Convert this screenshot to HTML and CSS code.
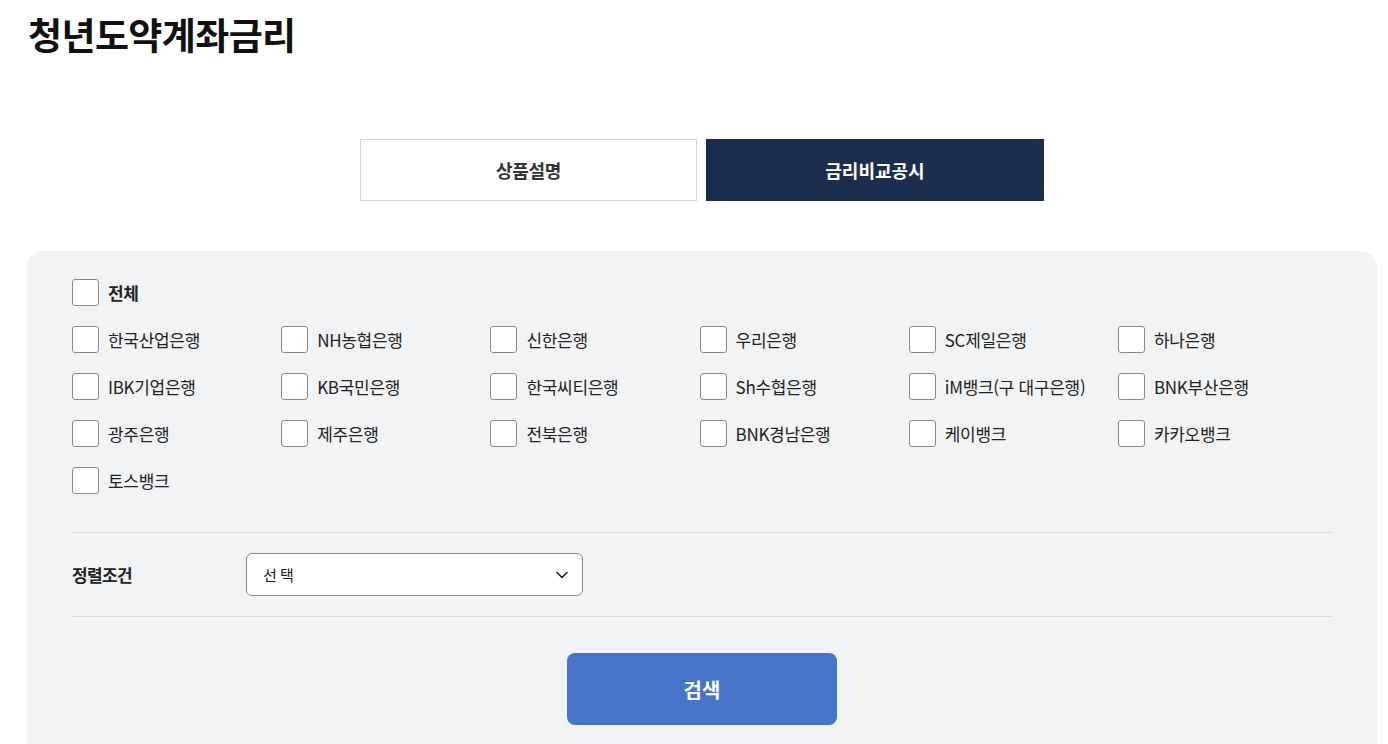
FILE: index.html
```html
<!DOCTYPE html>
<html lang="ko">
<head>
<meta charset="utf-8">
<title>청년도약계좌금리</title>
<link rel="stylesheet" href="styles.css">
</head>
<body>
<div class="page">
  <h1 class="title">청년도약계좌금리</h1>
  <div class="tabs">
    <div class="tab">상품설명</div>
    <div class="tab tab-active">금리비교공시</div>
  </div>
  <div class="panel">
    <label class="check check-all"><span class="box"></span><span class="lbl">전체</span></label>
    <div class="bank-grid">
      <label class="check"><span class="box"></span><span class="lbl">한국산업은행</span></label>
      <label class="check"><span class="box"></span><span class="lbl">NH농협은행</span></label>
      <label class="check"><span class="box"></span><span class="lbl">신한은행</span></label>
      <label class="check"><span class="box"></span><span class="lbl">우리은행</span></label>
      <label class="check"><span class="box"></span><span class="lbl">SC제일은행</span></label>
      <label class="check"><span class="box"></span><span class="lbl">하나은행</span></label>
      <label class="check"><span class="box"></span><span class="lbl">IBK기업은행</span></label>
      <label class="check"><span class="box"></span><span class="lbl">KB국민은행</span></label>
      <label class="check"><span class="box"></span><span class="lbl">한국씨티은행</span></label>
      <label class="check"><span class="box"></span><span class="lbl">Sh수협은행</span></label>
      <label class="check"><span class="box"></span><span class="lbl">iM뱅크(구 대구은행)</span></label>
      <label class="check"><span class="box"></span><span class="lbl">BNK부산은행</span></label>
      <label class="check"><span class="box"></span><span class="lbl">광주은행</span></label>
      <label class="check"><span class="box"></span><span class="lbl">제주은행</span></label>
      <label class="check"><span class="box"></span><span class="lbl">전북은행</span></label>
      <label class="check"><span class="box"></span><span class="lbl">BNK경남은행</span></label>
      <label class="check"><span class="box"></span><span class="lbl">케이뱅크</span></label>
      <label class="check"><span class="box"></span><span class="lbl">카카오뱅크</span></label>
      <label class="check"><span class="box"></span><span class="lbl">토스뱅크</span></label>
    </div>
    <div class="sort-row">
      <div class="sort-label">정렬조건</div>
      <div class="select">
        <span class="select-text">선 택</span>
        <svg class="chev" width="12" height="8" viewBox="0 0 12 8"><path d="M1 1.5 L6 6.5 L11 1.5" fill="none" stroke="#222" stroke-width="1.6" stroke-linecap="round" stroke-linejoin="round"/></svg>
      </div>
    </div>
    <div class="btn-row">
      <button class="search-btn">검색</button>
    </div>
  </div>
</div>
</body>
</html>
```

FILE: styles.css
```css
* { box-sizing: border-box; }
html, body { margin: 0; padding: 0; background: #fff; }
body {
  font-family: "Noto Sans CJK KR", "Noto Sans", "Liberation Sans", sans-serif;
  color: #222;
  height: 744px;
  overflow: hidden;
}
.page {
  width: 1350px;
  margin-left: 27px;
}
.title {
  margin: 0;
  padding-left: 1px;
  height: 68px;
  line-height: 68px;
  font-size: 37px;
  font-weight: 700;
  letter-spacing: -0.6px;
  color: #111;
}
.tabs {
  margin-top: 71px;
  display: flex;
  justify-content: center;
  gap: 9px;
}
.tab {
  width: 337px;
  height: 62px;
  border: 1px solid #d6d6d6;
  background: #fff;
  display: flex;
  align-items: center;
  justify-content: center;
  font-size: 18px;
  font-weight: 700;
  letter-spacing: -0.3px;
  color: #333;
}
.tab-active {
  width: 338px;
  background: #1c2e50;
  border-color: #1c2e50;
  color: #fff;
  letter-spacing: 0;
}
.panel {
  margin-top: 50px;
  background: #f2f3f5;
  border-radius: 16px 16px 0 0;
  padding: 28px 45px 40px;
  height: 520px;
}
.check {
  display: flex;
  align-items: center;
  height: 27px;
  gap: 9px;
}
.box {
  width: 27px;
  height: 27px;
  flex: none;
  background: #fff;
  border: 1px solid #8a8a8a;
  border-radius: 3px;
}
.lbl {
  font-size: 17px;
  letter-spacing: -0.3px;
  color: #222;
  white-space: nowrap;
}
.check-all .lbl {
  font-weight: 700;
}
.bank-grid {
  margin-top: 20px;
  display: grid;
  grid-template-columns: repeat(5, 209.2px) 1fr;
  row-gap: 20px;
  padding-bottom: 38px;
  border-bottom: 1px solid #dcdcdc;
}
.sort-row {
  display: flex;
  align-items: center;
  padding: 20px 0;
  border-bottom: 1px solid #dcdcdc;
}
.sort-label {
  width: 174px;
  font-size: 17px;
  font-weight: 700;
  letter-spacing: -0.6px;
  color: #222;
}
.select {
  width: 337px;
  height: 43px;
  background: #fff;
  border: 1px solid #8a8a8a;
  border-radius: 6px;
  display: flex;
  align-items: center;
  justify-content: space-between;
  padding: 0 14px 0 16px;
}
.select-text {
  font-size: 15px;
  letter-spacing: -0.5px;
  color: #222;
}
.chev { display: block; }
.btn-row {
  display: flex;
  justify-content: center;
  margin-top: 36px;
}
.search-btn {
  width: 270px;
  height: 72px;
  border: none;
  border-radius: 8px;
  background: #4574c8;
  color: #fff;
  font-family: inherit;
  font-size: 20px;
  font-weight: 700;
  letter-spacing: 0;
}
```
